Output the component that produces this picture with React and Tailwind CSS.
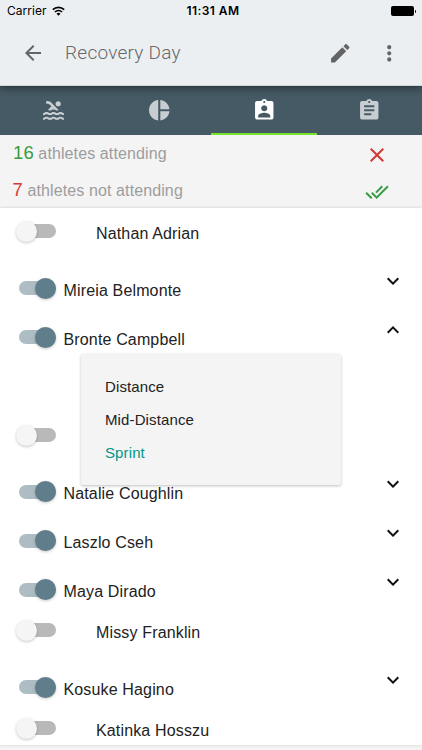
import {
  MdArrowBack, MdEdit, MdMoreVert, MdPool, MdPieChart, MdAssignmentInd,
  MdAssignment, MdClose, MdDoneAll, MdExpandMore, MdExpandLess,
} from 'react-icons/md';

const athletes = [
  { name: 'Nathan Adrian', on: false },
  { name: 'Mireia Belmonte', on: true },
  { name: 'Bronte Campbell', on: true, open: true },
  { name: '', on: false },
  { name: 'Natalie Coughlin', on: true },
  { name: 'Laszlo Cseh', on: true },
  { name: 'Maya Dirado', on: true },
  { name: 'Missy Franklin', on: false },
  { name: 'Kosuke Hagino', on: true },
  { name: 'Katinka Hosszu', on: false },
];

const tabs = [MdPool, MdPieChart, MdAssignmentInd, MdAssignment];

function Switch({ on }) {
  return (
    <span className={`flex h-[14px] w-[37px] shrink-0 items-center rounded-full ${on ? 'justify-end bg-[#aebdc4]' : 'bg-[#b9b9b9]'}`}>
      <span className={`size-[21px] shrink-0 rounded-full shadow-[0_1px_3px_rgba(0,0,0,0.22)] ${on ? 'bg-[#607d8b]' : '-ml-[2.5px] bg-[#f5f5f5]'}`} />
    </span>
  );
}

function SprintMenu() {
  return (
    <div className="absolute top-[48.5px] left-[81px] z-10 flex h-[131px] w-[260px] flex-col rounded-[2px] bg-[#f4f4f4] pt-[17px] pl-[24px] text-[15px] leading-[32.7px] tracking-[0.12px] text-[#222] shadow-[0_1px_3px_rgba(0,0,0,0.25)]">
      <span>Distance</span>
      <span>Mid-Distance</span>
      <span className="text-[#009688]">Sprint</span>
    </div>
  );
}

function Row({ name, on, open }) {
  return (
    <li className={`relative flex shrink-0 items-start pl-[18.5px] ${open ? 'h-[106px]' : 'h-[48.84px]'}`}>
      <div className={`flex h-[14px] flex-1 items-center ${on ? 'mt-[24.4px]' : 'mt-[16.4px]'}`}>
        <Switch on={on} />
        <span className={`pt-[5.2px] text-[16px] leading-[18px] tracking-[0.15px] whitespace-nowrap text-[#222] ${on ? 'ml-[8px]' : 'ml-[40.5px]'}`}>{name}</span>
      </div>
      {on && (
        <span className="mt-[12px] mr-[17px] text-[24px] text-[#111]">
          {open ? <MdExpandLess /> : <MdExpandMore />}
        </span>
      )}
      {open && <SprintMenu />}
    </li>
  );
}

export default function App() {
  return (
    <div className="flex h-[750px] w-[422px] flex-col overflow-hidden bg-[#f4f4f4] font-['Liberation_Sans',Arial,sans-serif]">
      <header className="relative z-10 h-[86px] shrink-0 border-b border-[#cfd5dc] bg-[#eceff2] shadow-[0_2px_8px_rgba(0,0,0,0.45)]">
        <div className="grid h-[22px] grid-cols-3 items-center font-['Inter','Liberation_Sans',sans-serif] text-[12px] text-black">
          <div className="flex items-center gap-[5px] pl-[7px]">
            <span className="text-[12px] tracking-[0.05px]">Carrier</span>
            <svg width="13" height="10" viewBox="0 0 13 10" fill="none" stroke="currentColor" strokeWidth="1.7">
              <path d="M.8 3.6a8.3 8.3 0 0 1 11.4 0M2.9 6a5.3 5.3 0 0 1 7.2 0" />
              <path d="M6.5 9.8 4.5 7.7a2.9 2.9 0 0 1 4 0z" fill="currentColor" stroke="none" />
            </svg>
          </div>
          <span className="pl-[4px] text-center font-semibold tracking-[0.45px] whitespace-nowrap">11:31 AM</span>
          <div className="flex items-center justify-end pr-[6px]">
            <span className="h-[10px] w-[23px] rounded-[2px] bg-black" />
            <span className="ml-px h-[3px] w-[1.5px] rounded-r bg-black" />
          </div>
        </div>
        <div className="flex h-[62px] items-center pl-[21px] text-[#626466]">
          <MdArrowBack size={24} />
          <h1 className="ml-[20px] flex-1 pt-px font-['Roboto',sans-serif] text-[19px] font-light tracking-[0.25px] text-[#66686a]">Recovery Day</h1>
          <MdEdit size={24.5} />
          <MdMoreVert size={24.5} className="mr-[21px] ml-[24px]" />
        </div>
      </header>
      <nav className="grid h-[49px] shrink-0 grid-cols-4 bg-[#455a64]">
        {tabs.map((Icon, i) => (
          <div key={i} className={`flex items-center justify-center border-b-2 pt-[1.5px] ${i < 2 ? 'pl-[1px]' : ''} ${i === 2 ? 'border-[#76e52e] text-white' : 'border-transparent text-[#c7cdd1]'}`}>
            <Icon size={i === 0 ? 25 : 24.5} />
          </div>
        ))}
      </nav>
      <section className="flex h-[73px] shrink-0 flex-col text-[16px] tracking-[0.11px] text-[#9d9d9d]">
        <div className="flex h-[37px] items-center pl-[13px]">
          <p className="flex-1 pb-[1.5px]"><span className="text-[18.5px] text-[#399b3d]">16</span> athletes attending</p>
          <MdClose size={24} className="mt-[2.5px] mr-[33px] text-[#d03a36]" />
        </div>
        <div className="flex h-[36px] items-center pl-[12.5px]">
          <p className="flex-1"><span className="text-[18.5px] text-[#d63a38]">7</span> athletes not attending</p>
          <MdDoneAll size={24} className="mt-[4px] mr-[33px] text-[#399b45]" />
        </div>
      </section>
      <ul className="flex h-[537px] shrink-0 flex-col overflow-hidden bg-white shadow-[0_0_3px_rgba(0,0,0,0.16)]">
        {athletes.map((a, i) => <Row key={i} {...a} />)}
      </ul>
    </div>
  );
}
